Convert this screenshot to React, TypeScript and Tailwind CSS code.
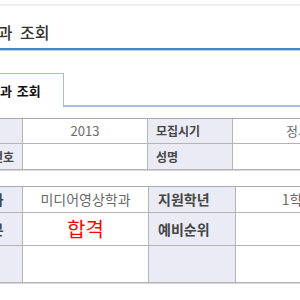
import React from "react";

const font = { fontFamily: '"Noto Sans CJK KR", "Noto Sans", sans-serif' };

function Cell({
  children,
  label,
  className = "",
}: {
  children?: React.ReactNode;
  label?: boolean;
  className?: string;
}) {
  return (
    <div
      className={
        "flex items-center border-r border-b border-[#b4b4b4] whitespace-nowrap overflow-hidden " +
        (label
          ? "bg-[#ebebf5] font-bold text-[#454545] pl-[8px] "
          : "bg-white justify-center text-[#6a6a6a] ") +
        className
      }
    >
      {children}
    </div>
  );
}

export default function App() {
  return (
    <div className="w-[300px] h-[300px] overflow-hidden bg-white" style={font}>
      <div className="h-[4px] bg-white" />
      <div className="h-[2px] bg-[#efefef]" />
      <div className="h-[44px] border-b-2 border-[#4a85cc] pt-[18px]">
        <div className="-ml-[17px] text-[16px] leading-[16px] text-[#333] font-medium whitespace-nowrap [word-spacing:4px]">
          결과 조회
        </div>
      </div>
      <div className="h-px bg-[#b6cce9]" />
      <div className="h-[22px]" />
      <div className="flex items-end">
        <div className="-ml-[30px] w-[94px] h-[34px] border border-b-0 border-[#a3badf] bg-white flex items-center pl-[17px]">
          <span className="text-[13px] font-bold text-[#111] whitespace-nowrap leading-none [word-spacing:2px]">
            결과 조회
          </span>
        </div>
        <div className="flex-1 h-[2px] bg-[#a8bee0]" />
      </div>
      <div className="h-[11px]" />
      <div className="-ml-[38px] w-[402px] grid grid-cols-[61px_125px_85px_131px] border-t border-[#a9a9a9] text-[12px] shadow-[0_1px_0_#d8d8d8]">
        <Cell label className="h-[25px]">년도</Cell>
        <Cell className="h-[25px] text-[13px]">2013</Cell>
        <Cell label className="h-[25px]">모집시기</Cell>
        <Cell className="h-[25px] text-[13px]">정시</Cell>
        <Cell label className="h-[26px]">수험번호</Cell>
        <Cell className="h-[26px]" />
        <Cell label className="h-[26px]">성명</Cell>
        <Cell className="h-[26px]" />
      </div>
      <div className="h-[16px]" />
      <div className="-ml-[57px] w-[419px] grid grid-cols-[80px_126px_87px_126px] border-t border-[#a9a9a9] text-[14px] shadow-[0_1px_0_#d8d8d8]">
        <Cell label className="h-[26px] pl-[9px]">지원학과</Cell>
        <Cell className="h-[26px]">미디어영상학과</Cell>
        <Cell label className="h-[26px] pl-[9px]">지원학년</Cell>
        <Cell className="h-[26px]">1학년</Cell>
        <Cell label className="h-[33px] pl-[9px]">합격구분</Cell>
        <Cell className="h-[33px]">
          <span className="text-[20px] text-[#ff0000] leading-none">합격</span>
        </Cell>
        <Cell label className="h-[33px] pl-[9px]">예비순위</Cell>
        <Cell className="h-[33px]" />
        <Cell label className="h-[37px]" />
        <Cell className="h-[37px]" />
        <Cell label className="h-[37px]" />
        <Cell className="h-[37px]" />
      </div>
    </div>
  );
}
